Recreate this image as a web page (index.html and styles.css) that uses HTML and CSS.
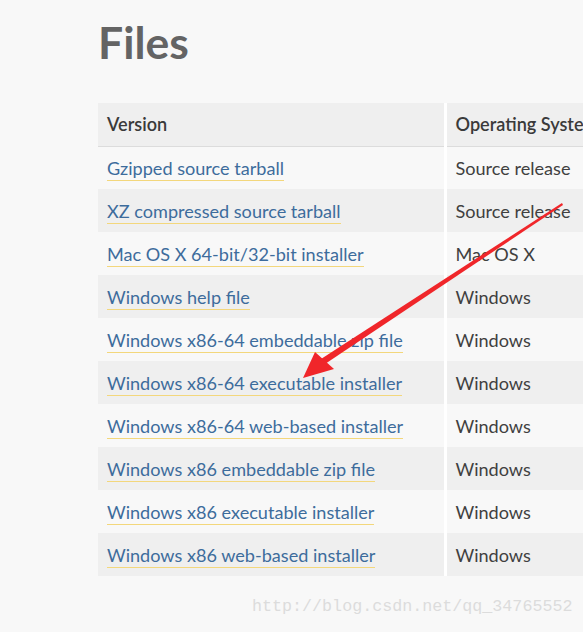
FILE: index.html
```html
<!DOCTYPE html>
<html>
<head>
<meta charset="utf-8">
<link rel="stylesheet" href="styles.css">
</head>
<body>
<div class="page">
  <h1 class="title">Files</h1>
  <table class="files">
    <thead>
      <tr><th class="c1">Version</th><th class="c2">Operating System</th></tr>
    </thead>
    <tbody>
      <tr><td class="c1"><a href="#">Gzipped source tarball</a></td><td class="c2">Source release</td></tr>
      <tr><td class="c1"><a href="#">XZ compressed source tarball</a></td><td class="c2">Source release</td></tr>
      <tr><td class="c1"><a href="#">Mac OS X 64-bit/32-bit installer</a></td><td class="c2">Mac OS X</td></tr>
      <tr><td class="c1"><a href="#">Windows help file</a></td><td class="c2">Windows</td></tr>
      <tr><td class="c1"><a href="#">Windows x86-64 embeddable zip file</a></td><td class="c2">Windows</td></tr>
      <tr><td class="c1"><a href="#">Windows x86-64 executable installer</a></td><td class="c2">Windows</td></tr>
      <tr><td class="c1"><a href="#">Windows x86-64 web-based installer</a></td><td class="c2">Windows</td></tr>
      <tr><td class="c1"><a href="#">Windows x86 embeddable zip file</a></td><td class="c2">Windows</td></tr>
      <tr><td class="c1"><a href="#">Windows x86 executable installer</a></td><td class="c2">Windows</td></tr>
      <tr><td class="c1"><a href="#">Windows x86 web-based installer</a></td><td class="c2">Windows</td></tr>
    </tbody>
  </table>
  <div class="watermark">http://blog.csdn.net/qq_34765552</div>
  <svg class="arrow" width="583" height="632" viewBox="0 0 583 632">
    <polygon points="562,203 563,205 325,364 321,359" fill="#f0262a"/>
    <polygon points="303,378 315,352 334,369" fill="#f0262a"/>
  </svg>
</div>
</body>
</html>
```
FILE: styles.css
```css
html, body {
  margin: 0;
  padding: 0;
  background: #f8f8f8;
  overflow: hidden;
}
.page {
  position: relative;
  width: 583px;
  height: 632px;
  padding-left: 98px;
  box-sizing: border-box;
  font-family: "Lato", "Open Sans", sans-serif;
}
.title {
  margin: 0;
  padding-top: 14px;
  height: 103px;
  box-sizing: border-box;
  font-size: 44.5px;
  font-weight: 700;
  color: #646464;
  line-height: 56px;
}
.files {
  border-collapse: collapse;
  width: 600px;
  font-size: 18.1px;
}
.files th, .files td {
  height: 43px;
  padding: 0 0 0 9px;
  text-align: left;
  white-space: nowrap;
  box-sizing: border-box;
}
.files th {
  background: #efefef;
  font-weight: 600;
  color: #3a3a3a;
  border-bottom: 1px solid #dcdcdc;
}
.files .c1 {
  width: 347px;
  border-right: 3px solid #ffffff;
}
.files tbody tr:nth-child(odd) td {
  background: #f8f8f8;
}
.files tbody tr:nth-child(even) td {
  background: #efefef;
}
.files td.c2 {
  color: #404040;
}
.files a {
  color: #3d6c9c;
  text-decoration: none;
  border-bottom: 1px solid #f3d77c;
  padding-bottom: 1px;
}
.watermark {
  position: absolute;
  left: 252px;
  top: 597px;
  font-family: "Liberation Mono", monospace;
  font-size: 16.7px;
  color: #dcdcdc;
}
.arrow {
  position: absolute;
  left: 0;
  top: 0;
  pointer-events: none;
}
```
